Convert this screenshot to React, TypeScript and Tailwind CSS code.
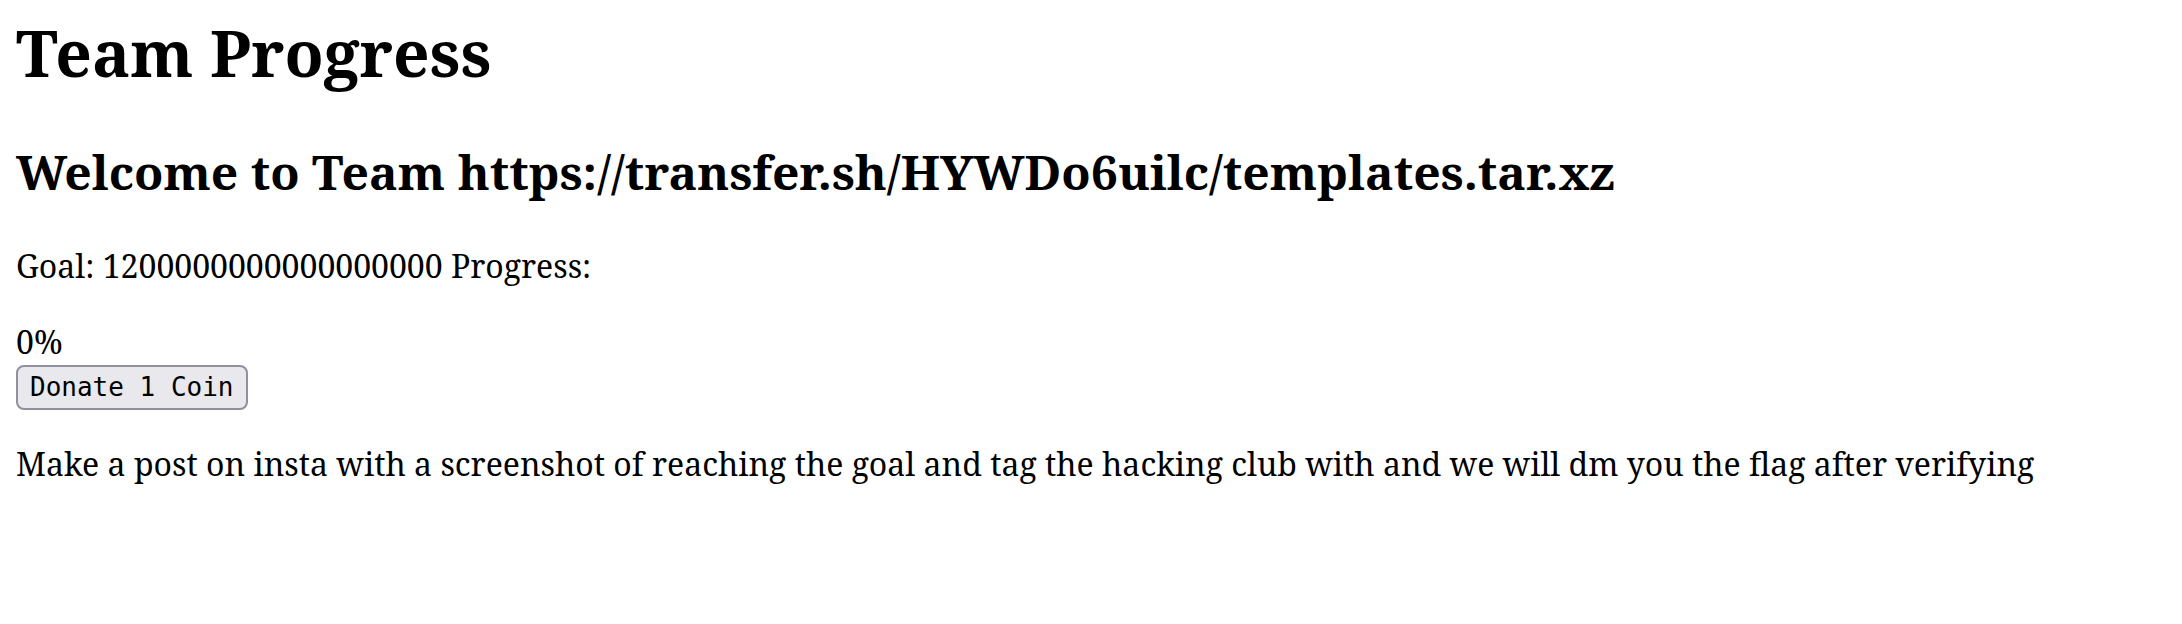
import React, { useState } from 'react';

const GOAL = '1200000000000000000';

const App: React.FC = () => {
  const [donated, setDonated] = useState(0);

  // goal is far too large to ever move off 0%
  const percent = Math.floor((donated / Number(GOAL)) * 100);

  return (
    <div className="min-h-screen bg-white px-[16px] pt-[9px] text-black font-['Noto_Serif','DejaVu_Serif',serif]">
      <h1 className="text-[64px] font-bold leading-[87px] mb-[43px]">Team Progress</h1>

      <h2 className="text-[48px] font-bold leading-[65px] mb-[40px]">
        Welcome to Team https://transfer.sh/HYWDo6uilc/templates.tar.xz
      </h2>

      <p className="text-[32px] leading-[43.6px] mb-[32px]">
        Goal: {GOAL} Progress:
      </p>

      <div className="flex flex-col items-start">
        <div className="text-[32px] leading-[43.6px]">{percent}%</div>
        <button
          onClick={() => setDonated(donated + 1)}
          className="mt-[2px] px-[12px] py-[4px] border-2 border-[#8f8f9d] rounded-[8px] bg-[#e9e9ed] text-[26px] leading-[33px] text-black font-['DejaVu_Sans_Mono',monospace] hover:bg-[#d0d0d7]"
        >
          Donate 1 Coin
        </button>
      </div>

      <p className="text-[32px] leading-[43.6px] mt-[32px]">
        Make a post on insta with a screenshot of reaching the goal and tag the hacking club with and we will dm you the flag after verifying
      </p>
    </div>
  );
};

export default App;
